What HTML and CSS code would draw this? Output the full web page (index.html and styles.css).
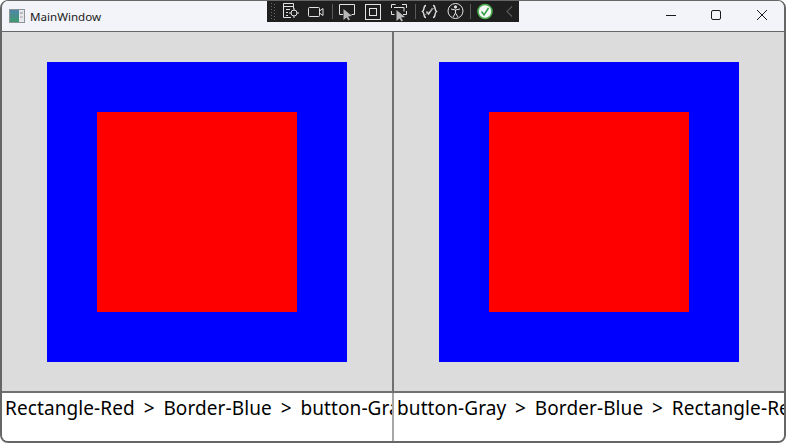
FILE: index.html
```html
<!DOCTYPE html>
<html lang="en">
<head>
    <meta charset="UTF-8">
    <title>MainWindow</title>
    <link rel="stylesheet" href="styles.css">
</head>
<body>
    <div class="window">
        <div class="titlebar">
            <svg class="app-icon" width="16" height="14" viewBox="0 0 16 14">
                <defs>
                    <linearGradient id="iconFill" x1="0" y1="0" x2="0" y2="1">
                        <stop offset="0" stop-color="#4f86a8"/>
                        <stop offset="1" stop-color="#3f9a70"/>
                    </linearGradient>
                </defs>
                <rect x="0.5" y="0.5" width="15" height="13" fill="#e6e8ea" stroke="#8d949a"/>
                <rect x="1" y="1" width="9" height="12" fill="url(#iconFill)"/>
                <rect x="11" y="3" width="3" height="2" fill="#b4babf"/>
                <rect x="11" y="7" width="3" height="2" fill="#c4c8cc"/>
            </svg>
            <span class="title">MainWindow</span>
            <div class="caption-buttons">
                <svg width="46" height="30" viewBox="0 0 46 30">
                    <path d="M20 14.500h10" stroke="#1a1a1a" fill="none"/>
                </svg>
                <svg width="46" height="30" viewBox="0 0 46 30">
                    <rect x="19.500" y="9.500" width="9" height="9" rx="1.500" stroke="#1a1a1a" fill="none"/>
                </svg>
                <svg width="46" height="30" viewBox="0 0 46 30">
                    <path d="M19 9l10 10M29 9l-10 10" stroke="#1a1a1a" fill="none"/>
                </svg>
            </div>
        </div>

        <div class="panes">
            <div class="pane">
                <div class="outer-box"><div class="inner-box"></div></div>
            </div>
            <div class="pane">
                <div class="outer-box"><div class="inner-box"></div></div>
            </div>
        </div>

        <div class="paths">
            <div class="path">Rectangle-Red &nbsp;&gt;&nbsp; Border-Blue &nbsp;&gt;&nbsp; button-Gray</div>
            <div class="path">button-Gray &nbsp;&gt;&nbsp; Border-Blue &nbsp;&gt;&nbsp; Rectangle-Red</div>
        </div>
    </div>

    <!-- debug toolbar floats over the title bar -->
    <div class="debug-bar">
        <svg width="252" height="21" viewBox="0 0 252 21" fill="none" stroke="#e2e2e2">
            <path d="M4.500 2v17M7.500 3v16" stroke="#6a6a6a" stroke-dasharray="1 2"/>

            <path d="M24 16.500h-7.500v-14h10v5M16.500 5.500h10M19 8.500h4M19 11.500h2M19 14.500h2"/>
            <circle cx="27" cy="12" r="3"/>
            <path d="M27 7v2.500M27 14.500v2.500M22 12h2.500M29.500 12h2.500"/>

            <rect x="41.500" y="6.500" width="11" height="9" rx="1"/>
            <path d="M52.500 10l3.500-2.500v7l-3.500-2.500"/>
            <path d="M65.500 3v15" stroke="#5a5a5a"/>

            <path d="M76 13.500h-3.500v-10h15v10h-3"/>
            <path d="M76.500 8v11l3-2.500 2 3 1.500-1-2-3 4-.5z" fill="#b8b8b8" stroke="none"/>

            <rect x="98.500" y="3.500" width="15" height="15"/>
            <rect x="102.500" y="7.500" width="7" height="7"/>

            <path d="M124.500 7v-3.500h4M135 3.500h4.500v3.500M124.500 10v3.500h3M136 13.500h3.500v-3.500M127 6.500h10v4"/>
            <path d="M129.500 9v11l3-2.500 2 3 1.500-1-2-3 4-.5z" fill="#b8b8b8" stroke="none"/>
            <path d="M148.500 3v15" stroke="#5a5a5a"/>

            <path d="M159 4.500c-3 0-1 4.500-3.500 6 2.500 1.500 .5 6 3.500 6M166 4.500c3 0 1 4.500 3.500 6-2.500 1.500-.5 6-3.500 6" stroke-width="1.400"/>
            <path d="M159.500 10.500l2 2.500 4-5.500" stroke-width="1.400"/>
            <path d="M158 14l9-7" stroke="#8a8a8a"/>

            <circle cx="188.500" cy="10" r="7.500"/>
            <circle cx="188.500" cy="6" r="1.200" fill="#e2e2e2"/>
            <path d="M184 8l4.500 1 4.500-1M188.500 9v3l-2.500 4M188.500 12l2.500 4"/>
            <path d="M203.500 3v15" stroke="#5a5a5a"/>

            <circle cx="218" cy="10.500" r="7" fill="#f4f6f4" stroke="#4cae50" stroke-width="1.600"/>
            <path d="M214.500 10.500l2.500 3.500 4.500-7" stroke="#2f9e44" stroke-width="1.500"/>

            <path d="M245 5.500l-5 5 5 5" stroke="#5c5c5c" stroke-width="1.200"/>
        </svg>
    </div>
</body>
</html>
```

FILE: styles.css
```css
body {
    margin: 0;
    height: 443px;
    background: #fff;
    overflow: hidden;
    font-family: "Noto Sans", "Noto Sans CJK SC", sans-serif;
}

.window {
    box-sizing: border-box;
    height: 443px;
    display: flex;
    flex-direction: column;
    border: 2px solid #666;
    border-top-width: 1px;
    border-radius: 8px;
    overflow: hidden;
}

.titlebar {
    height: 30px;
    flex: none;
    display: flex;
    align-items: center;
    background: #f2f4f9;
    border-bottom: 1px solid #666;
    color: #1a1a1a;
}

.app-icon {
    margin-left: 7px;
}

.title {
    margin-left: 5px;
    font-size: 11.6px;
}

.caption-buttons {
    margin-left: auto;
    display: flex;
}

.panes {
    height: 359px;
    flex: none;
    display: grid;
    grid-template-columns: 390px 390px;
    column-gap: 2px;
    background: #707070;
    border-bottom: 2px solid #707070;
}

.pane {
    background: #dcdcdc;
    display: flex;
    justify-content: center;
    align-items: center;
}

.outer-box {
    width: 300px;
    height: 300px;
    background: #00f;
    display: flex;
    justify-content: center;
    align-items: center;
}

.inner-box {
    width: 200px;
    height: 200px;
    background: #f00;
}

.paths {
    flex: 1;
    min-height: 0;
    display: grid;
    grid-template-columns: 390px 390px;
    column-gap: 2px;
    background: #a6a6a6;
}

.path {
    background: #fff;
    padding-left: 3px;
    font-size: 19px;
    line-height: 30px;
    letter-spacing: 0.1px;
    word-spacing: -0.65px;
    white-space: nowrap;
    overflow: hidden;
    color: #000;
}

.debug-bar {
    position: absolute;
    left: 267px;
    top: 1px;
    width: 252px;
    height: 21px;
    background: #1f1f1f;
}

.debug-bar svg {
    display: block;
}
```
